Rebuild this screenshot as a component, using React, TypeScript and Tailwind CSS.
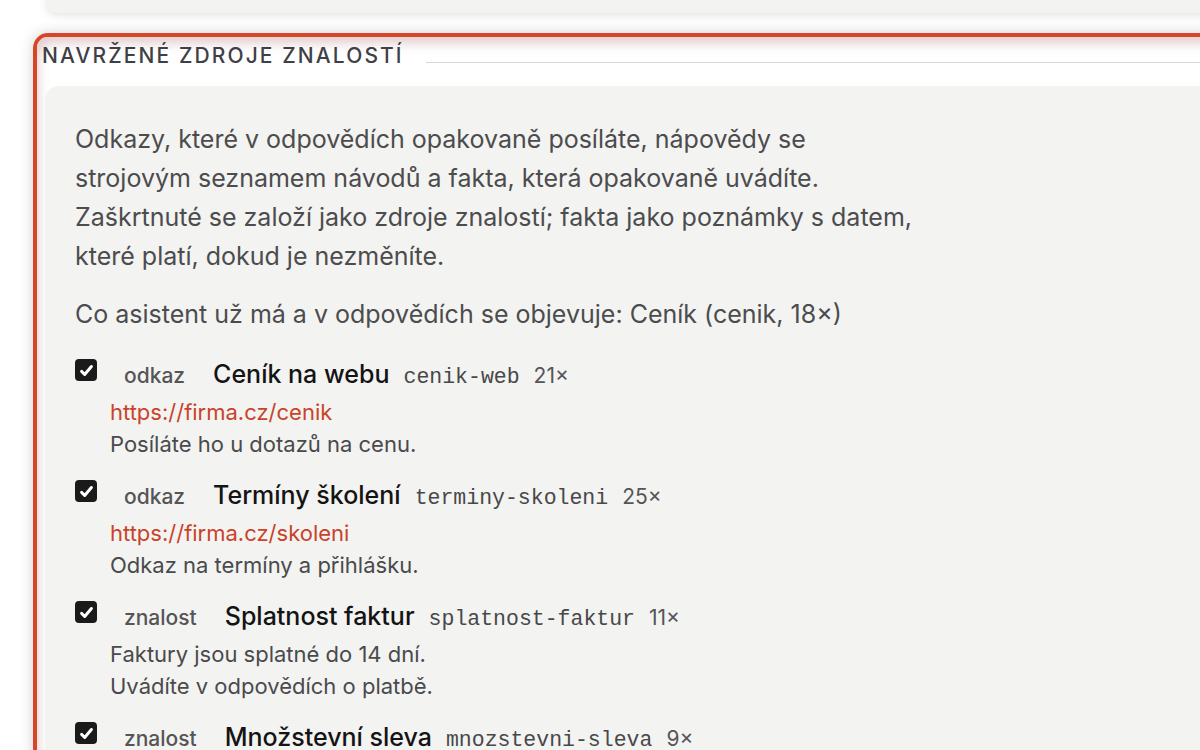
import React from 'react';

interface Suggestion {
  kind: string;
  title: string;
  slug: string;
  count: number;
  url?: string;
  lines: string[];
}

const suggestions: Suggestion[] = [
  { kind: 'odkaz', title: 'Ceník na webu', slug: 'cenik-web', count: 21, url: 'https://firma.cz/cenik', lines: ['Posíláte ho u dotazů na cenu.'] },
  { kind: 'odkaz', title: 'Termíny školení', slug: 'terminy-skoleni', count: 25, url: 'https://firma.cz/skoleni', lines: ['Odkaz na termíny a přihlášku.'] },
  { kind: 'znalost', title: 'Splatnost faktur', slug: 'splatnost-faktur', count: 11, lines: ['Faktury jsou splatné do 14 dní.', 'Uvádíte v odpovědích o platbě.'] },
  { kind: 'znalost', title: 'Množstevní sleva', slug: 'mnozstevni-sleva', count: 9, lines: ['Při odběru nad 10 kusů sleva 5 %.', 'Zmiňujete u větších objednávek.'] },
];

const CheckBox = () => (
  <span className="mt-[5px] flex h-[22px] w-[22px] shrink-0 items-center justify-center rounded-[4px] bg-[#1a1a1a]">
    <svg className="h-[17px] w-[17px]" viewBox="0 0 16 16" fill="none" stroke="white" strokeWidth={2.8} strokeLinecap="round" strokeLinejoin="round">
      <path d="M3.4 8.8l2.9 2.9L12.6 4.2" />
    </svg>
  </span>
);

const App: React.FC = () => {
  return (
    <div className="relative h-[750px] w-[1200px] overflow-hidden bg-white font-['Inter',sans-serif]">
      {/* previous card, mostly scrolled away */}
      <div className="ml-[45px] -mr-10 h-[13px] rounded-bl-[14px] bg-[#f3f3f1] shadow-[0_2px_10px_rgba(0,0,0,0.12)]" />

      <div className="ml-[33px] -mr-10 mt-[20px] rounded-tl-[15px] border-[4px] border-[#d8462a] shadow-[0_0_14px_rgba(0,0,0,0.18)]">
        <div className="rounded-tl-[11px] bg-white pb-10 shadow-[inset_5px_10px_12px_-4px_rgba(190,140,140,0.45)]">
          <div className="flex items-start pl-[5px] pt-[7px]">
            <h2 className="whitespace-nowrap text-[21px] font-medium leading-[24px] tracking-[0.1em] text-[#3f3f47]">
              NAVRŽENÉ ZDROJE ZNALOSTÍ
            </h2>
            <div className="ml-[22px] mt-[18px] h-px flex-1 bg-[#d8d8d6]" />
          </div>

          <div className="ml-[8px] mt-[18px] rounded-tl-[14px] bg-[#f3f3f1] pl-[30px] pt-[34px] pb-10">
            <p className="whitespace-nowrap text-[25px] leading-[39px] text-[#4c4c4e]">
              Odkazy, které v odpovědích opakovaně posíláte, nápovědy se<br />
              strojovým seznamem návodů a fakta, která opakovaně uvádíte.<br />
              Zaškrtnuté se založí jako zdroje znalostí; fakta jako poznámky s datem,<br />
              které platí, dokud je nezměníte.
            </p>
            <p className="mt-[19px] whitespace-nowrap text-[25px] leading-[39px] text-[#4c4c4e]">
              Co asistent už má a v odpovědích se objevuje: Ceník (cenik, 18×)
            </p>

            <div className="mt-[20px] flex flex-col gap-[15px]">
              {suggestions.map((s) => (
                <div key={s.slug}>
                  <div className="flex items-start">
                    <CheckBox />
                    <div className="ml-[27px] flex h-[40px] items-baseline gap-[14px] whitespace-nowrap leading-[40px]">
                      <span className="mr-[14px] text-[21px] font-medium text-[#555557]">{s.kind}</span>
                      <span className="text-[25px] font-medium text-[#141414]">{s.title}</span>
                      <span className="font-['Liberation_Mono',monospace] text-[21.5px] text-[#48484a]">{s.slug}</span>
                      <span className="text-[21px] text-[#555557]">{s.count}×</span>
                    </div>
                  </div>
                  <div className="mt-[2px] pl-[35px] text-[22px] leading-[32px]">
                    {s.url && <div className="text-[#c9432b]">{s.url}</div>}
                    {s.lines.map((l) => (
                      <div key={l} className="text-[#4a4a4c]">{l}</div>
                    ))}
                  </div>
                </div>
              ))}
            </div>
          </div>
        </div>
      </div>
    </div>
  );
};

export default App;
